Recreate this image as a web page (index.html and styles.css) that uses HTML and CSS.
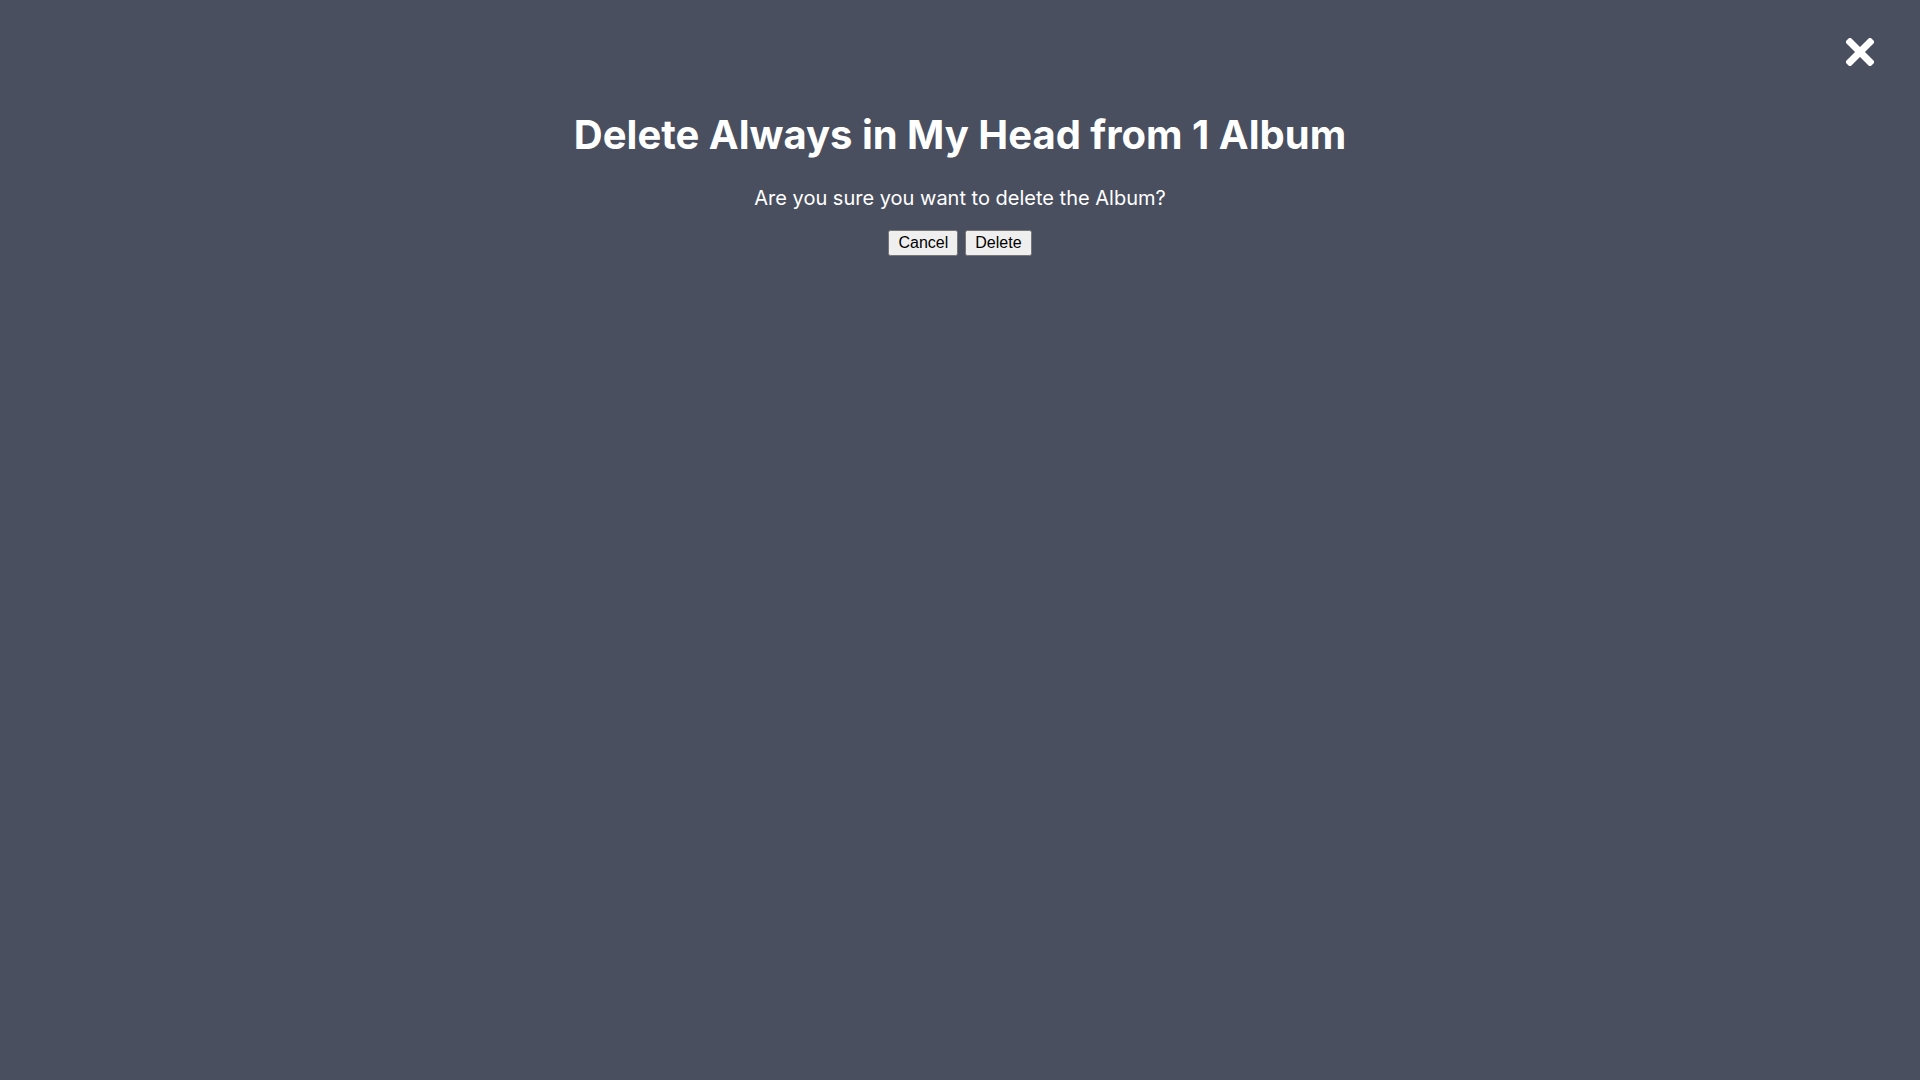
FILE: index.html
```html
<!DOCTYPE html>
<html lang="en">
<head>
<meta charset="utf-8">
<title>Delete Album</title>
<link rel="stylesheet" href="styles.css">
</head>
<body>
<div class="modal">
  <button class="close" aria-label="Close">
    <svg width="28" height="28" viewBox="0 0 28 28"><path d="M4 4 L24 24 M24 4 L4 24" stroke="#fff" stroke-width="7" stroke-linecap="square"/></svg>
  </button>
  <div class="content">
    <h1 class="title">Delete Always in My Head from 1 Album</h1>
    <p class="message">Are you sure you want to delete the Album?</p>
    <div class="actions">
      <button class="btn">Cancel</button>
      <button class="btn">Delete</button>
    </div>
  </div>
</div>
</body>
</html>
```
FILE: styles.css
```css
html, body {
  margin: 0;
  padding: 0;
  height: 100%;
}
body {
  background: #494f5f;
  font-family: Inter, "Noto Sans", sans-serif;
  color: #fff;
}
.modal {
  position: relative;
  height: 100%;
}
.close {
  position: absolute;
  top: 38px;
  right: 46px;
  background: none;
  border: none;
  padding: 0;
  cursor: pointer;
  line-height: 0;
}
.content {
  display: flex;
  flex-direction: column;
  align-items: center;
  padding-top: 110px;
}
.title {
  margin: 0;
  font-size: 40px;
  font-weight: 700;
  line-height: 50px;
}
.message {
  margin: 24px 0 0;
  font-size: 20px;
  line-height: 28px;
}
.actions {
  display: flex;
  gap: 7px;
  margin-top: 18px;
}
.btn {
  font-family: "Liberation Sans", Arial, sans-serif;
  font-size: 16px;
  color: #000;
  padding: 2px 8px;
}
```
